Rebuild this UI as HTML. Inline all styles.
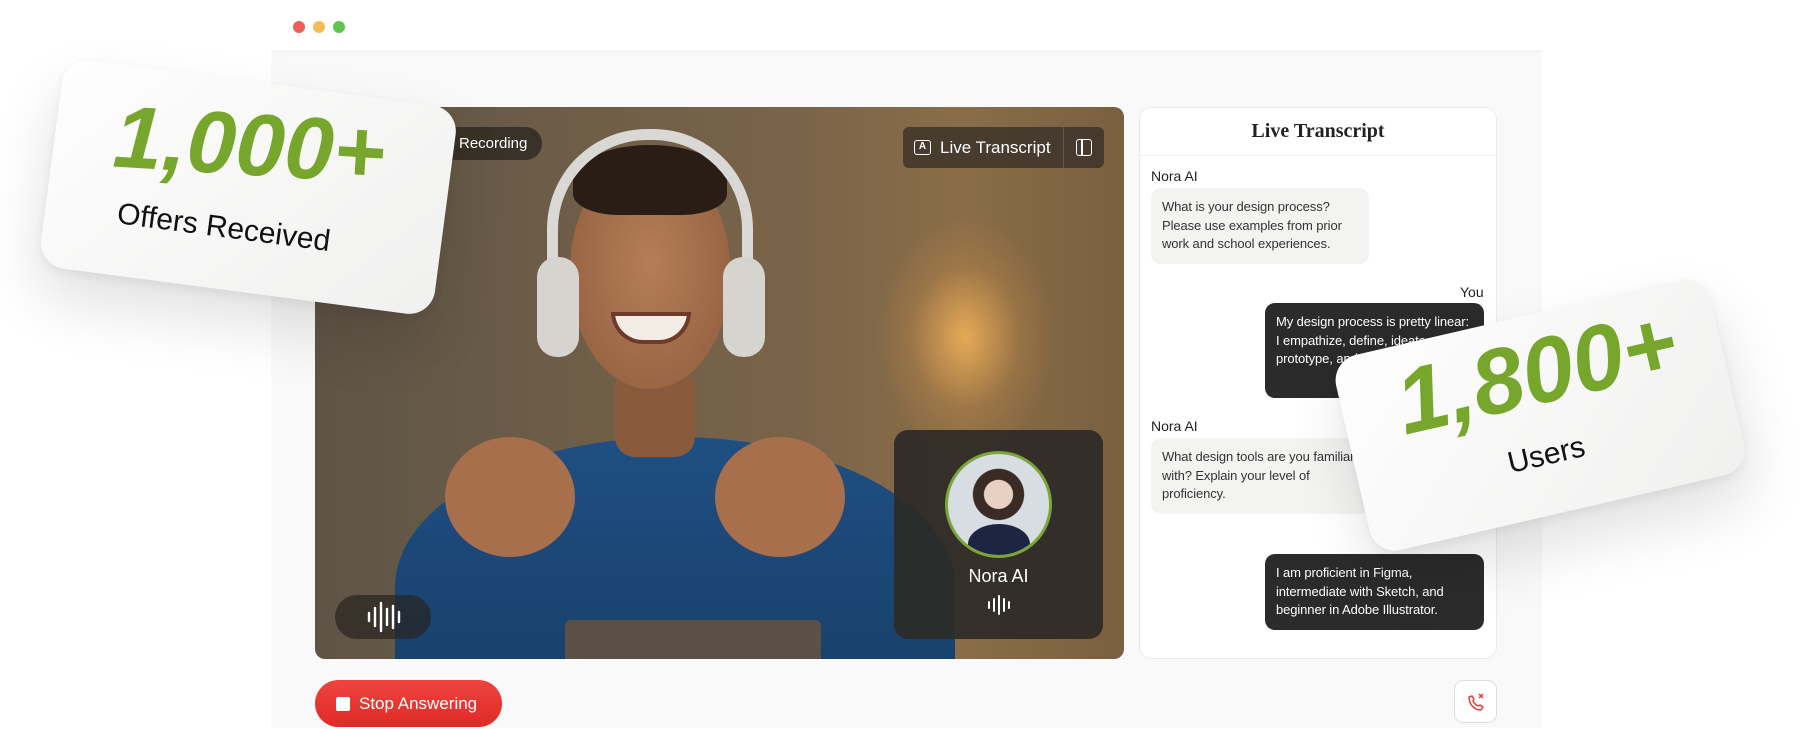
<!DOCTYPE html>
<html><head><meta charset="utf-8"><style>
*{margin:0;padding:0;box-sizing:border-box}
body{width:1800px;height:728px;overflow:hidden;background:#fff;font-family:"Liberation Sans",sans-serif;position:relative}
.abs{position:absolute}
.dot{position:absolute;top:21px;width:12px;height:12px;border-radius:50%}
.panel{left:271px;top:51px;width:1271px;height:677px;background:#f9f9f9;border-top:1px solid #ececec}
.video{left:315px;top:107px;width:809px;height:552px;border-radius:10px;overflow:hidden;
background:radial-gradient(ellipse 90px 120px at 650px 230px,rgba(245,180,90,.85),rgba(200,140,70,.3) 60%,transparent 100%),
linear-gradient(90deg,#5e5446 0%,#6d5d48 30%,#7a6449 60%,#8a6d48 80%,#7a6040 100%)}
.pill{background:rgba(40,36,30,.75);color:#fff;font-size:16px}
.bub{position:absolute;font-size:13px;line-height:18.6px;padding:10px 10px 10px 11px;border-radius:10px;letter-spacing:-0.1px}
.g{background:#f3f3f2;color:#333;left:1151px;width:218px}
.d{background:#2b2b2b;color:#fff;left:1265px;width:219px}
.lbl{position:absolute;font-size:14px;color:#222}
.card{position:absolute;background:linear-gradient(135deg,#fefefe,#f0f0ef);border-radius:26px;box-shadow:0 30px 60px rgba(0,0,0,.12),0 4px 10px rgba(0,0,0,.06)}
.hand{font-family:"Liberation Sans",sans-serif;font-style:italic;font-weight:bold;color:#77a62c;position:absolute;white-space:nowrap}
</style></head><body>
<div class="dot" style="left:293px;background:#ec5f57"></div>
<div class="dot" style="left:313px;background:#f4bd4f"></div>
<div class="dot" style="left:333px;background:#5fc454"></div>
<div class="abs panel"></div>

<div class="abs video">
  <div class="abs" style="left:80px;top:330px;width:560px;height:300px;border-radius:50% 50% 0 0;background:linear-gradient(180deg,#1f4f82,#173c66)"></div>
  <div class="abs" style="left:300px;top:260px;width:80px;height:90px;background:#8a5a3c;border-radius:20px"></div>
  <div class="abs" style="left:255px;top:52px;width:160px;height:230px;border-radius:48% 48% 50% 50%;background:radial-gradient(ellipse at 50% 45%,#b57e58,#8e5b3c)"></div>
  <div class="abs" style="left:258px;top:38px;width:154px;height:70px;border-radius:50% 50% 30% 30%;background:#2a1d16"></div>
  <div class="abs" style="left:232px;top:22px;width:206px;height:150px;border:11px solid #d9d8d4;border-bottom:none;border-radius:100px 100px 0 0"></div>
  <div class="abs" style="left:222px;top:150px;width:42px;height:100px;border-radius:20px;background:#d6d4cf"></div>
  <div class="abs" style="left:408px;top:150px;width:42px;height:100px;border-radius:20px;background:#d6d4cf"></div>
  <div class="abs" style="left:296px;top:205px;width:80px;height:32px;border-radius:0 0 40px 40px;background:#f2ece4;border:4px solid #6e3a2c"></div>
  <div class="abs" style="left:130px;top:330px;width:130px;height:120px;border-radius:50%;background:#a86f4c"></div>
  <div class="abs" style="left:400px;top:330px;width:130px;height:120px;border-radius:50%;background:#a86f4c"></div>
  <div class="abs" style="left:250px;top:513px;width:256px;height:50px;border-radius:6px;background:#5a5048"></div>

  <div class="abs pill" style="left:0;top:20px;width:227px;height:33px;border-radius:0 17px 17px 0;line-height:33px;padding-left:144px;font-size:15px">Recording</div>
  <div class="abs pill" style="left:588px;top:20px;width:201px;height:41px;border-radius:6px;line-height:41px;font-size:17px;background:rgba(60,52,42,.85)">
    <span style="position:absolute;left:11px;top:13px;width:17px;height:15px;border:1.6px solid #fff;border-radius:3px;font-size:10px;line-height:12px;text-align:center;font-weight:bold">A</span>
    <span style="position:absolute;left:37px">Live Transcript</span>
    <span style="position:absolute;left:160px;top:0;width:1px;height:41px;background:rgba(255,255,255,.15)"></span>
    <span style="position:absolute;left:173px;top:12px;width:16px;height:17px;border:1.6px solid #fff;border-radius:3px"></span>
    <span style="position:absolute;left:178px;top:12px;width:1.6px;height:17px;background:#fff"></span>
  </div>
  <div class="abs" style="left:20px;top:488px;width:96px;height:44px;border-radius:22px;background:rgba(40,36,32,.7)">
    <svg width="96" height="44"><g stroke="#fff" stroke-width="2.4" stroke-linecap="round"><line x1="34" y1="18" x2="34" y2="26"/><line x1="40" y1="13" x2="40" y2="31"/><line x1="46" y1="8" x2="46" y2="36"/><line x1="52" y1="14" x2="52" y2="30"/><line x1="58" y1="11" x2="58" y2="33"/><line x1="64" y1="17" x2="64" y2="27"/></g></svg>
  </div>
  <div class="abs" style="left:579px;top:323px;width:209px;height:209px;border-radius:14px;background:rgba(44,42,38,.92)">
    <div class="abs" style="left:51px;top:21px;width:107px;height:107px;border-radius:50%;border:3px solid #7aa53a;background:radial-gradient(circle at 50% 40%,#e8d0c2 0 18%,#3a2b24 19% 32%,#d7dde3 33%);overflow:hidden">
      <div class="abs" style="left:20px;top:70px;width:62px;height:40px;border-radius:50% 50% 0 0;background:#1c2640"></div>
    </div>
    <div class="abs" style="left:0;top:136px;width:209px;text-align:center;color:#fff;font-size:18px">Nora AI</div>
    <svg class="abs" style="left:90px;top:164px" width="30" height="22"><g stroke="#fff" stroke-width="2" stroke-linecap="round"><line x1="5" y1="8" x2="5" y2="14"/><line x1="10" y1="5" x2="10" y2="17"/><line x1="15" y1="2" x2="15" y2="20"/><line x1="20" y1="5" x2="20" y2="17"/><line x1="25" y1="8" x2="25" y2="14"/></g></svg>
  </div>
</div>

<div class="abs" style="left:1139px;top:107px;width:358px;height:552px;background:#fff;border:1px solid #ebebeb;border-radius:12px">
  <div style="height:48px;border-bottom:1px solid #efefef;text-align:center;line-height:46px;font-family:'Liberation Serif',serif;font-size:20px;font-weight:bold;color:#222">Live Transcript</div>
</div>
<div class="lbl" style="left:1151px;top:168px">Nora AI</div>
<div class="bub g" style="top:188px;height:76px">What is your design process? Please use examples from prior work and school experiences.</div>
<div class="lbl" style="left:1460px;top:284px">You</div>
<div class="bub d" style="top:303px;height:95px">My design process is pretty linear: I empathize, define, ideate, prototype, and test.</div>
<div class="lbl" style="left:1151px;top:418px">Nora AI</div>
<div class="bub g" style="top:438px;height:76px">What design tools are you familiar with? Explain your level of proficiency.</div>
<div class="bub d" style="top:554px;height:76px">I am proficient in Figma, intermediate with Sketch, and beginner in Adobe Illustrator.</div>

<div class="abs" style="left:315px;top:680px;width:187px;height:47px;border-radius:24px;background:linear-gradient(180deg,#ee4440,#e02a26);color:#fff;font-size:17px;line-height:47px;padding-left:44px">
  <span style="position:absolute;left:21px;top:17px;width:14px;height:14px;background:#fff;border-radius:2px"></span>Stop Answering</div>
<div class="abs" style="left:1454px;top:680px;width:43px;height:43px;border-radius:9px;background:#fff;border:1px solid #ddd">
  <svg width="43" height="43"><path d="M14 16c0 7 5 13 12 13l2-3-3-2-2 1c-2-1-4-3-5-5l1-2-2-3z" fill="none" stroke="#e0403c" stroke-width="1.5" stroke-linejoin="round"/><path d="M24 13l4 4M28 13l-4 4" stroke="#e0403c" stroke-width="1.5"/></svg>
</div>

<div class="card" style="left:50px;top:82px;width:397px;height:210px;transform:rotate(7.5deg)">
  <div class="hand" style="left:58px;top:12px;font-size:88px;transform:rotate(-4deg)">1,000+</div>
  <div class="abs" style="left:72px;top:132px;font-size:30px;color:#111">Offers Received</div>
</div>
<div class="card" style="left:1348px;top:315px;width:384px;height:200px;transform:rotate(-13deg)">
  <div class="hand" style="left:56px;top:6px;font-size:92px">1,800+</div>
  <div class="abs" style="left:150px;top:124px;font-size:30px;color:#111">Users</div>
</div>
</body></html>
